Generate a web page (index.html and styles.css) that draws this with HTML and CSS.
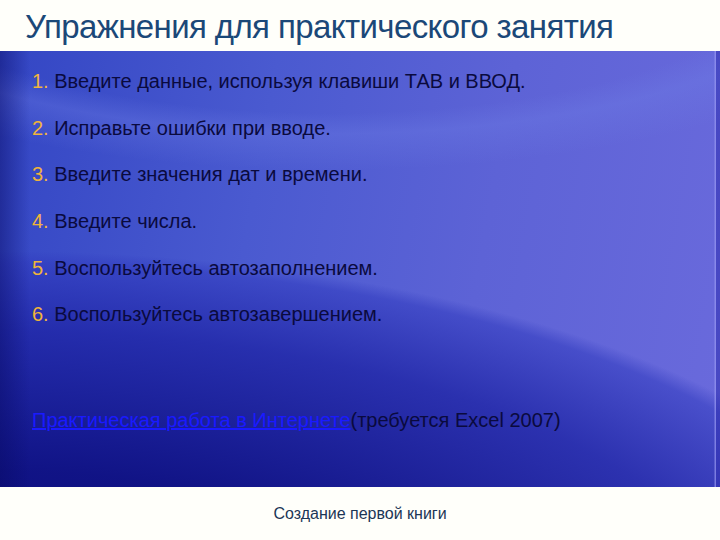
FILE: index.html
```html
<!DOCTYPE html>
<html lang="ru">
<head>
<meta charset="utf-8">
<link rel="stylesheet" href="styles.css">
</head>
<body>
<div class="slide">
  <header class="head">
    <h1 class="title">Упражнения для практического занятия</h1>
  </header>
  <main class="panel">
    <ol class="steps">
      <li><span class="num">1.</span> Введите данные, используя клавиши ТАВ и ВВОД.</li>
      <li><span class="num">2.</span> Исправьте ошибки при вводе.</li>
      <li><span class="num">3.</span> Введите значения дат и времени.</li>
      <li><span class="num">4.</span> Введите числа.</li>
      <li><span class="num">5.</span> Воспользуйтесь автозаполнением.</li>
      <li><span class="num">6.</span> Воспользуйтесь автозавершением.</li>
    </ol>
    <p class="online"><a class="link" href="#">Практическая работа в Интернете</a>(требуется Excel 2007)</p>
  </main>
  <footer class="foot">Создание первой книги</footer>
</div>
</body>
</html>
```
FILE: styles.css
```css
html, body {
  margin: 0;
  padding: 0;
  background: #fffffa;
}
.slide {
  width: 720px;
  height: 540px;
  display: flex;
  flex-direction: column;
  font-family: "Liberation Sans", Arial, sans-serif;
}
.head {
  height: 51px;
  display: flex;
  align-items: flex-end;
  padding-left: 25px;
}
.title {
  margin: 0 0 4px 0;
  font-weight: normal;
  font-size: 33px;
  line-height: 40px;
  color: #1b4878;
  letter-spacing: -0.6px;
  white-space: nowrap;
}
.panel {
  height: 436px;
  box-sizing: border-box;
  padding: 18px 0 0 32px;
  display: flex;
  flex-direction: column;
  background:
    linear-gradient(270deg, rgba(50,50,180,0.6) 0, rgba(50,50,180,0.6) 4px, rgba(150,150,240,0.7) 4px, rgba(150,150,240,0.7) 5px, rgba(150,150,240,0) 6px),
    linear-gradient(90deg, rgba(8,10,100,0.45) 0, rgba(8,10,100,0) 30px),
    radial-gradient(ellipse 940px 400px at 0 600px, rgba(8,8,118,1) 0%, rgba(14,16,130,0.95) 45%, rgba(30,36,165,0.8) 80%, rgba(48,58,190,0.55) 97%, rgba(48,58,190,0) 100%),
    radial-gradient(ellipse 700px 260px at 330px -120px, rgba(120,130,235,0) 70%, rgba(110,125,230,0.35) 78%, rgba(110,125,230,0) 92%),
    linear-gradient(100deg, #3346c4 0%, #4a5ad0 35%, #5d63d6 65%, #6a6adc 100%);
  color: #0a0a3e;
}
.steps {
  list-style: none;
  margin: 0;
  padding: 0;
  display: flex;
  flex-direction: column;
  gap: 22.7px;
}
.steps li {
  font-size: 20px;
  line-height: 24px;
  white-space: nowrap;
}
.num {
  color: #f0b43a;
}
.online {
  margin: 82px 0 0 0;
  font-size: 20px;
  line-height: 24px;
  white-space: nowrap;
}
.link {
  color: #1a1aff;
  text-decoration: underline;
}
.foot {
  flex: 1;
  display: flex;
  align-items: center;
  justify-content: center;
  font-size: 16px;
  color: #1b3656;
}
```
